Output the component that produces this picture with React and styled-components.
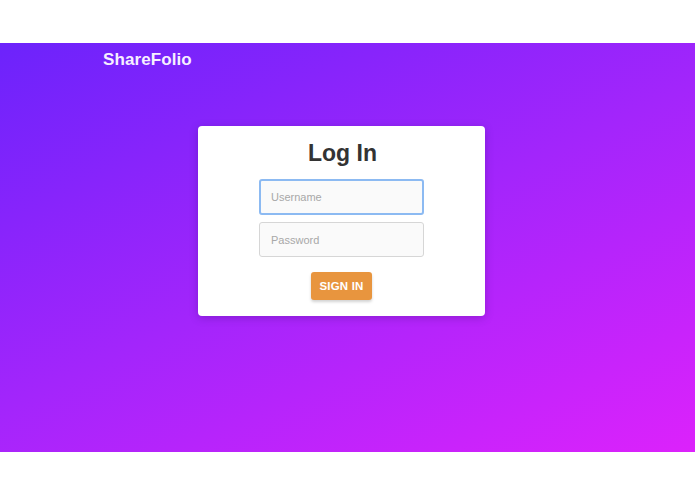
import React from "react";
import styled, { createGlobalStyle } from "styled-components";

const Global = createGlobalStyle`
  html, body { margin: 0; padding: 0; background: #fff; }
  body { font-family: "Liberation Sans", Arial, sans-serif; }
  * { box-sizing: border-box; }
`;

const Page = styled.div`
  padding-top: 43px;
  height: 494px;
  background: #fff;
`;

const Hero = styled.main`
  height: 409px;
  background: linear-gradient(155deg, #6c23fb 0%, #a325fb 50%, #dc22fb 100%);
  display: flex;
  flex-direction: column;
`;

const NavBar = styled.header`
  height: 34px;
  padding-left: 103px;
  display: flex;
  align-items: center;
`;

const Brand = styled.div`
  color: #f6efff;
  font-family: "Liberation Sans", Arial, sans-serif;
  font-weight: 700;
  font-size: 17px;
  letter-spacing: 0.1px;
`;

const Center = styled.div`
  display: flex;
  justify-content: center;
  padding-right: 12px;
  padding-top: 49px;
`;

const Card = styled.form`
  width: 287px;
  height: 190px;
  background: #fff;
  border-radius: 4px;
  box-shadow: 0 2px 8px rgba(40, 0, 90, 0.25);
  display: flex;
  flex-direction: column;
  align-items: center;
  padding-top: 13px;
`;

const Title = styled.h1`
  margin: 0 0 0 2px;
  font-family: "Liberation Sans", Arial, sans-serif;
  font-weight: 700;
  font-size: 23px;
  line-height: 28px;
  color: #333;
`;

const Field = styled.input`
  width: 165px;
  height: ${(p) => (p.$focus ? 36 : 35)}px;
  margin-top: ${(p) => p.$mt}px;
  border-radius: 3px;
  border: ${(p) => (p.$focus ? "2px solid #8cbaf2" : "1px solid #d6d6d6")};
  background: #fafafa;
  padding: 0 ${(p) => (p.$focus ? 10 : 11)}px;
  font-family: "Liberation Sans", Arial, sans-serif;
  font-size: 11px;
  color: #333;
  outline: none;
  caret-color: #333;
  &::placeholder { color: #a8a8a8; }
`;

const Button = styled.button`
  margin-top: 15px;
  width: 61px;
  height: 28px;
  border: none;
  border-radius: 3px;
  background: #e8953e;
  color: #fff;
  font-family: "Liberation Sans", Arial, sans-serif;
  font-weight: 700;
  font-size: 11.5px;
  letter-spacing: 0.2px;
  box-shadow: 0 2px 3px rgba(0, 0, 0, 0.18);
  padding: 0;
`;

export default function App() {
  return (
    <>
      <Global />
      <Page>
        <Hero>
          <NavBar>
            <Brand>ShareFolio</Brand>
          </NavBar>
          <Center>
            <Card onSubmit={(e) => e.preventDefault()}>
              <Title>Log In</Title>
              <Field $mt={12} $focus autoFocus placeholder="Username" />
              <Field $mt={7} type="password" placeholder="Password" />
              <Button type="submit">SIGN IN</Button>
            </Card>
          </Center>
        </Hero>
      </Page>
    </>
  );
}
